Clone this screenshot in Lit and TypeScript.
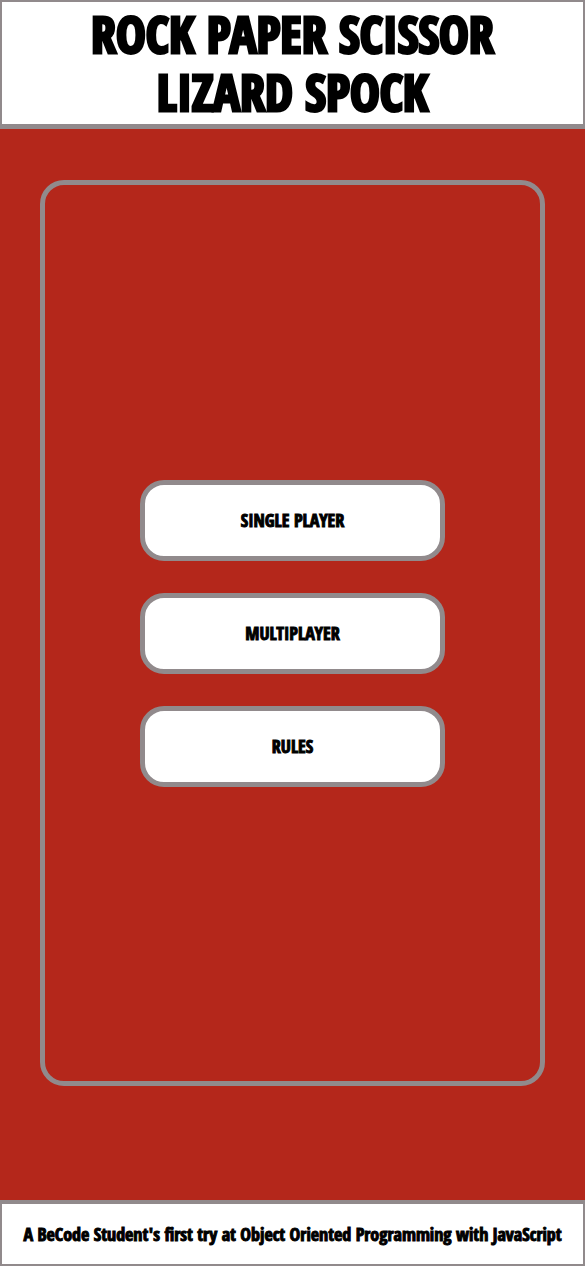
import { LitElement, html, css } from "lit";
import { customElement } from "lit/decorators.js";

@customElement("app-root")
export class AppRoot extends LitElement {
  static styles = css`
    :host {
      display: flex;
      flex-direction: column;
      min-height: 100vh;
      background: #b4271b;
      color: #000;
      font-family: Impact, "Open Sans Condensed", "Liberation Sans Narrow", sans-serif;
      font-weight: 800;
      text-align: center;
      -webkit-text-stroke: 1px #000;
    }
    * {
      box-sizing: border-box;
    }
    .header {
      padding: 3px 72px;
      border: 2px solid #918a8c;
      border-bottom-width: 5px;
      background: #fff;
    }
    .title {
      margin: 0;
      font-size: 50px;
      font-weight: inherit;
      line-height: 58px;
      text-transform: uppercase;
      -webkit-text-stroke-width: 3px;
    }
    .main {
      flex: 1;
      display: flex;
      padding: 51px 40px 114px;
    }
    .panel {
      flex: 1;
      display: flex;
      flex-direction: column;
      justify-content: center;
      gap: 32px;
      padding: 0 95px;
      border: 5px solid #918a8c;
      border-radius: 24px;
    }
    .choice {
      height: 81px;
      border: 5px solid #918a8c;
      border-radius: 24px;
      background: #fff;
      color: inherit;
      font: inherit;
      font-size: 18px;
      text-transform: uppercase;
      cursor: pointer;
    }
    .footer {
      padding: 15px 0;
      border: 2px solid #918a8c;
      border-top-width: 4px;
      background: #fff;
      font-size: 18px;
      line-height: 30px;
    }
    .credit {
      margin: 0;
    }
  `;

  render() {
    return html`
      <header class="header">
        <h1 class="title">Rock Paper Scissor Lizard Spock</h1>
      </header>
      <main class="main">
        <section class="panel">
          <button class="choice" type="button">Single player</button>
          <button class="choice" type="button">Multiplayer</button>
          <button class="choice" type="button">Rules</button>
        </section>
      </main>
      <footer class="footer">
        <p class="credit">A BeCode Student's first try at Object Oriented Programming with JavaScript</p>
      </footer>
    `;
  }
}
